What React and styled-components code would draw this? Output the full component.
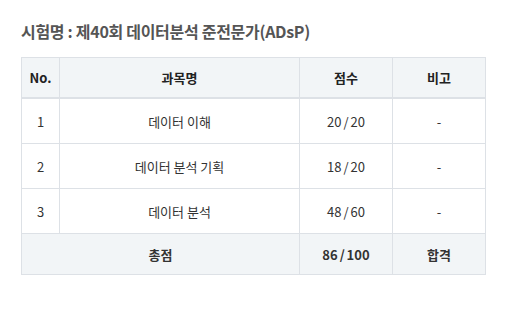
import React from "react";
import styled, { createGlobalStyle } from "styled-components";

const Global = createGlobalStyle`
  html, body { margin: 0; padding: 0; background: #fff; }
  body { font-family: "Noto Sans CJK KR", "Noto Sans", sans-serif; }
`;

const Page = styled.div`
  padding: 19px 21px 0 21px;
`;

const Title = styled.h2`
  margin: 0 0 14px 0;
  font-size: 16px;
  line-height: 24px;
  font-weight: 700;
  color: #555;
  letter-spacing: -0.3px;
`;

const Table = styled.table`
  width: 465px;
  border-collapse: collapse;
  table-layout: fixed;
  font-size: 13px;
  color: #333;
  border: 1px solid #dde1e6;
`;

const Th = styled.th`
  height: 39px;
  padding: 0;
  background: #f2f5f7;
  border: 1px solid #dde1e6;
  border-bottom: 2px solid #dde1e6;
  font-weight: 700;
  color: #222;
  text-align: center;
`;

const Td = styled.td`
  height: 44px;
  padding: 0;
  border: 1px solid #dde1e6;
  text-align: center;
  font-weight: 400;
  color: #333;
`;

const FootCell = styled.td`
  height: 40px;
  padding: 0;
  background: #f2f5f7;
  border: 1px solid #dde1e6;
  text-align: center;
  font-weight: 700;
  color: #333;
`;

const Score = styled.span`
  word-spacing: -1px;
`;

const rows = [
  { no: 1, name: "데이터 이해", score: "20 / 20", note: "-" },
  { no: 2, name: "데이터 분석 기획", score: "18 / 20", note: "-" },
  { no: 3, name: "데이터 분석", score: "48 / 60", note: "-" },
];

export default function App() {
  return (
    <Page>
      <Global />
      <Title>시험명 : 제40회 데이터분석 준전문가(ADsP)</Title>
      <Table>
        <colgroup>
          <col style={{ width: 38 }} />
          <col style={{ width: 240 }} />
          <col style={{ width: 93 }} />
          <col style={{ width: 93 }} />
        </colgroup>
        <thead>
          <tr>
            <Th>No.</Th>
            <Th>과목명</Th>
            <Th>점수</Th>
            <Th>비고</Th>
          </tr>
        </thead>
        <tbody>
          {rows.map((r) => (
            <tr key={r.no}>
              <Td>{r.no}</Td>
              <Td>{r.name}</Td>
              <Td><Score>{r.score}</Score></Td>
              <Td>{r.note}</Td>
            </tr>
          ))}
        </tbody>
        <tfoot>
          <tr>
            <FootCell colSpan={2}>총점</FootCell>
            <FootCell><Score>86 / 100</Score></FootCell>
            <FootCell>합격</FootCell>
          </tr>
        </tfoot>
      </Table>
    </Page>
  );
}
